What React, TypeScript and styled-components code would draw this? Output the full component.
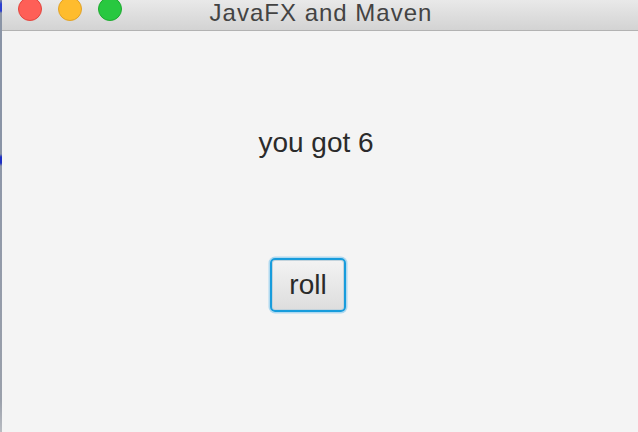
import React from "react";
import styled, { createGlobalStyle } from "styled-components";

const Global = createGlobalStyle`
  html, body { margin: 0; padding: 0; background: #f4f4f4; overflow: hidden; }
  #root { width: 638px; height: 432px; }
`;

const Screen = styled.div`
  display: flex;
  width: 638px;
  height: 432px;
  overflow: hidden;
  font-family: "Liberation Sans", Arial, sans-serif;
`;

const DesktopEdge = styled.div`
  width: 2px;
  flex: none;
  background: linear-gradient(
    to bottom,
    #7f8aa0 0px,
    #2c3fd0 4px,
    #2c3fd0 11px,
    #8a94a6 13px,
    #8a94a6 154px,
    #1d2fc4 157px,
    #1d2fc4 163px,
    #8e97a8 166px,
    #9aa0ab 400px,
    #b9bcc2 432px
  );
`;

const Window = styled.div`
  flex: 1;
  display: flex;
  flex-direction: column;
  min-width: 0;
`;

const TitleBar = styled.div`
  height: 30px;
  flex: none;
  display: grid;
  grid-template-columns: 1fr auto 1fr;
  align-items: start;
  background: linear-gradient(to bottom, #e9e9e9, #d3d3d3);
  border-bottom: 1px solid #b2b2b2;
  box-shadow: 0 1px 0 #dcdcdc;
`;

const Lights = styled.div`
  display: flex;
  gap: 16px;
  padding-left: 16px;
  margin-top: -3px;
`;

const Light = styled.span<{ $fill: string; $edge: string }>`
  width: 22px;
  height: 22px;
  border-radius: 50%;
  background: ${(p) => p.$fill};
  border: 1px solid ${(p) => p.$edge};
`;

const Title = styled.div`
  font-size: 24px;
  letter-spacing: 1px;
  line-height: 25px;
  color: #434343;
  white-space: nowrap;
  margin-left: 2px;
`;

const Content = styled.div`
  flex: 1;
  display: flex;
  flex-direction: column;
  align-items: center;
  padding-top: 96px;
  background: #f4f4f4;
`;

const Result = styled.div`
  font-size: 28px;
  line-height: 32px;
  color: #2b2b2b;
  margin-right: 8px;
`;

const RollButton = styled.button`
  margin-top: 99px;
  margin-right: 24px;
  width: 76px;
  height: 54px;
  box-sizing: border-box;
  padding: 0;
  border: 2px solid #179cdc;
  border-radius: 5px;
  box-shadow: 0 0 0 1.5px rgba(90, 185, 235, 0.45), inset 0 0 0 1px #c3d3dc;
  background: linear-gradient(to bottom, #f3f3f3, #dddddd);
  font-family: "Liberation Sans", Arial, sans-serif;
  font-size: 28px;
  line-height: 32px;
  color: #2a2a2a;
  cursor: pointer;
`;

export default function App() {
  return (
    <>
      <Global />
      <Screen>
        <DesktopEdge />
        <Window>
          <TitleBar>
            <Lights>
              <Light $fill="#fe5f57" $edge="#e2463f" />
              <Light $fill="#febc2e" $edge="#e0a228" />
              <Light $fill="#28c840" $edge="#1eaa30" />
            </Lights>
            <Title>JavaFX and Maven</Title>
            <span />
          </TitleBar>
          <Content>
            <Result>you got 6</Result>
            <RollButton>roll</RollButton>
          </Content>
        </Window>
      </Screen>
    </>
  );
}
